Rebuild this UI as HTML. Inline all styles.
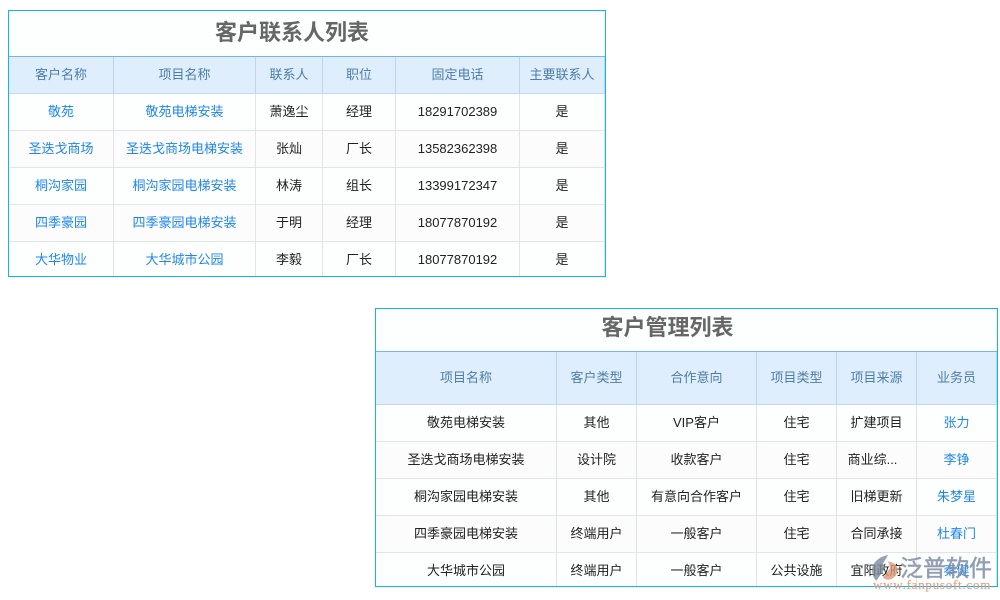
<!DOCTYPE html>
<html lang="zh"><head><meta charset="utf-8"><style>
html,body{margin:0;padding:0;width:1000px;height:600px;background:#fff;overflow:hidden}
*{box-sizing:border-box}
.w{position:absolute;border:1px solid #0fb4f2;overflow:hidden;background:#fdfefe;font:13px/1 "Liberation Sans","Noto Sans CJK SC",sans-serif;color:#222}
.t{font-weight:bold;font-size:22px;color:#666;text-align:center;border-bottom:1px solid #72b6ee}
table{border-collapse:separate;border-spacing:0;table-layout:fixed;position:absolute;left:0}
td,th{padding:0 0 2px;text-align:center;font-weight:normal;border-right:1px solid #e3e4e6;border-bottom:1px solid #e3e4e6;white-space:nowrap;overflow:hidden}
th{background:#dfeefc;color:#4c7ea8;border-right-color:#bfd6ea;border-bottom-color:#bedbf2}
tr:nth-child(even) td{background:#fcfcfc}
td.a{color:#1f87ec}
#a{left:8px;top:10px;width:598px;height:267px}
#a .t{height:46px;line-height:44px;padding-right:30px}
#a table{top:46px;width:596px}
#a th{height:37px}#a td{height:37px}
#b{left:375px;top:308px;width:623px;height:279px}
#b .t{height:43px;line-height:37px;padding-right:38px}
#b table{top:43px;width:621px}
#b th{height:53px}#b td{height:37px}
td.e{padding-right:8px}
.l{position:absolute}
</style></head><body>
<div class="w" id="a"><div class="t">客户联系人列表</div>
<table><colgroup><col style="width:105px"><col style="width:142px"><col style="width:67px"><col style="width:73px"><col style="width:124px"><col style="width:85px"></colgroup>
<thead><tr><th>客户名称</th><th>项目名称</th><th>联系人</th><th>职位</th><th>固定电话</th><th>主要联系人</th></tr></thead>
<tbody>
<tr><td class="a">敬苑</td><td class="a">敬苑电梯安装</td><td>萧逸尘</td><td>经理</td><td>18291702389</td><td>是</td></tr>
<tr><td class="a">圣迭戈商场</td><td class="a">圣迭戈商场电梯安装</td><td>张灿</td><td>厂长</td><td>13582362398</td><td>是</td></tr>
<tr><td class="a">桐沟家园</td><td class="a">桐沟家园电梯安装</td><td>林涛</td><td>组长</td><td>13399172347</td><td>是</td></tr>
<tr><td class="a">四季豪园</td><td class="a">四季豪园电梯安装</td><td>于明</td><td>经理</td><td>18077870192</td><td>是</td></tr>
<tr><td class="a">大华物业</td><td class="a">大华城市公园</td><td>李毅</td><td>厂长</td><td>18077870192</td><td>是</td></tr>
</tbody></table></div>

<div class="w" id="b"><div class="t">客户管理列表</div>
<table><colgroup><col style="width:181px"><col style="width:80px"><col style="width:120px"><col style="width:80px"><col style="width:80px"><col style="width:80px"></colgroup>
<thead><tr><th>项目名称</th><th>客户类型</th><th>合作意向</th><th>项目类型</th><th>项目来源</th><th>业务员</th></tr></thead>
<tbody>
<tr><td>敬苑电梯安装</td><td>其他</td><td>VIP客户</td><td>住宅</td><td>扩建项目</td><td class="a">张力</td></tr>
<tr><td>圣迭戈商场电梯安装</td><td>设计院</td><td>收款客户</td><td>住宅</td><td class="e">商业综...</td><td class="a">李铮</td></tr>
<tr><td>桐沟家园电梯安装</td><td>其他</td><td>有意向合作客户</td><td>住宅</td><td>旧梯更新</td><td class="a">朱梦星</td></tr>
<tr><td>四季豪园电梯安装</td><td>终端用户</td><td>一般客户</td><td>住宅</td><td>合同承接</td><td class="a">杜春门</td></tr>
<tr><td>大华城市公园</td><td>终端用户</td><td>一般客户</td><td>公共设施</td><td>宜阳政府</td><td class="a">秦健</td></tr>
</tbody></table></div>

<svg class="l" style="left:870px;top:554px;opacity:.8" width="32" height="30" viewBox="0 0 30 28"><path d="M17 1C9 2 2 8 2 15c0 4 1 7 4 10l9-13-3-3z" fill="#7d8a9c"/><path d="M17 7c5 0 9 4 9 8s-4 9-9 9c-2 0-4-1-5-2l7-9z" fill="#dc9a78"/></svg>
<div class="l" style="left:900px;top:552px;font:23px/28px 'Noto Sans CJK SC',sans-serif;-webkit-text-stroke:.5px #7f8ea4;color:#7f8ea4;opacity:.85;white-space:nowrap">泛普软件</div>
<div class="l" style="left:873px;top:579px;font:13px/12px 'Liberation Serif',serif;-webkit-text-stroke:.2px #dd9a7a;color:#dd9a7a;opacity:.9;white-space:nowrap;letter-spacing:.75px">www.fanpusoft.com</div>
</body></html>
